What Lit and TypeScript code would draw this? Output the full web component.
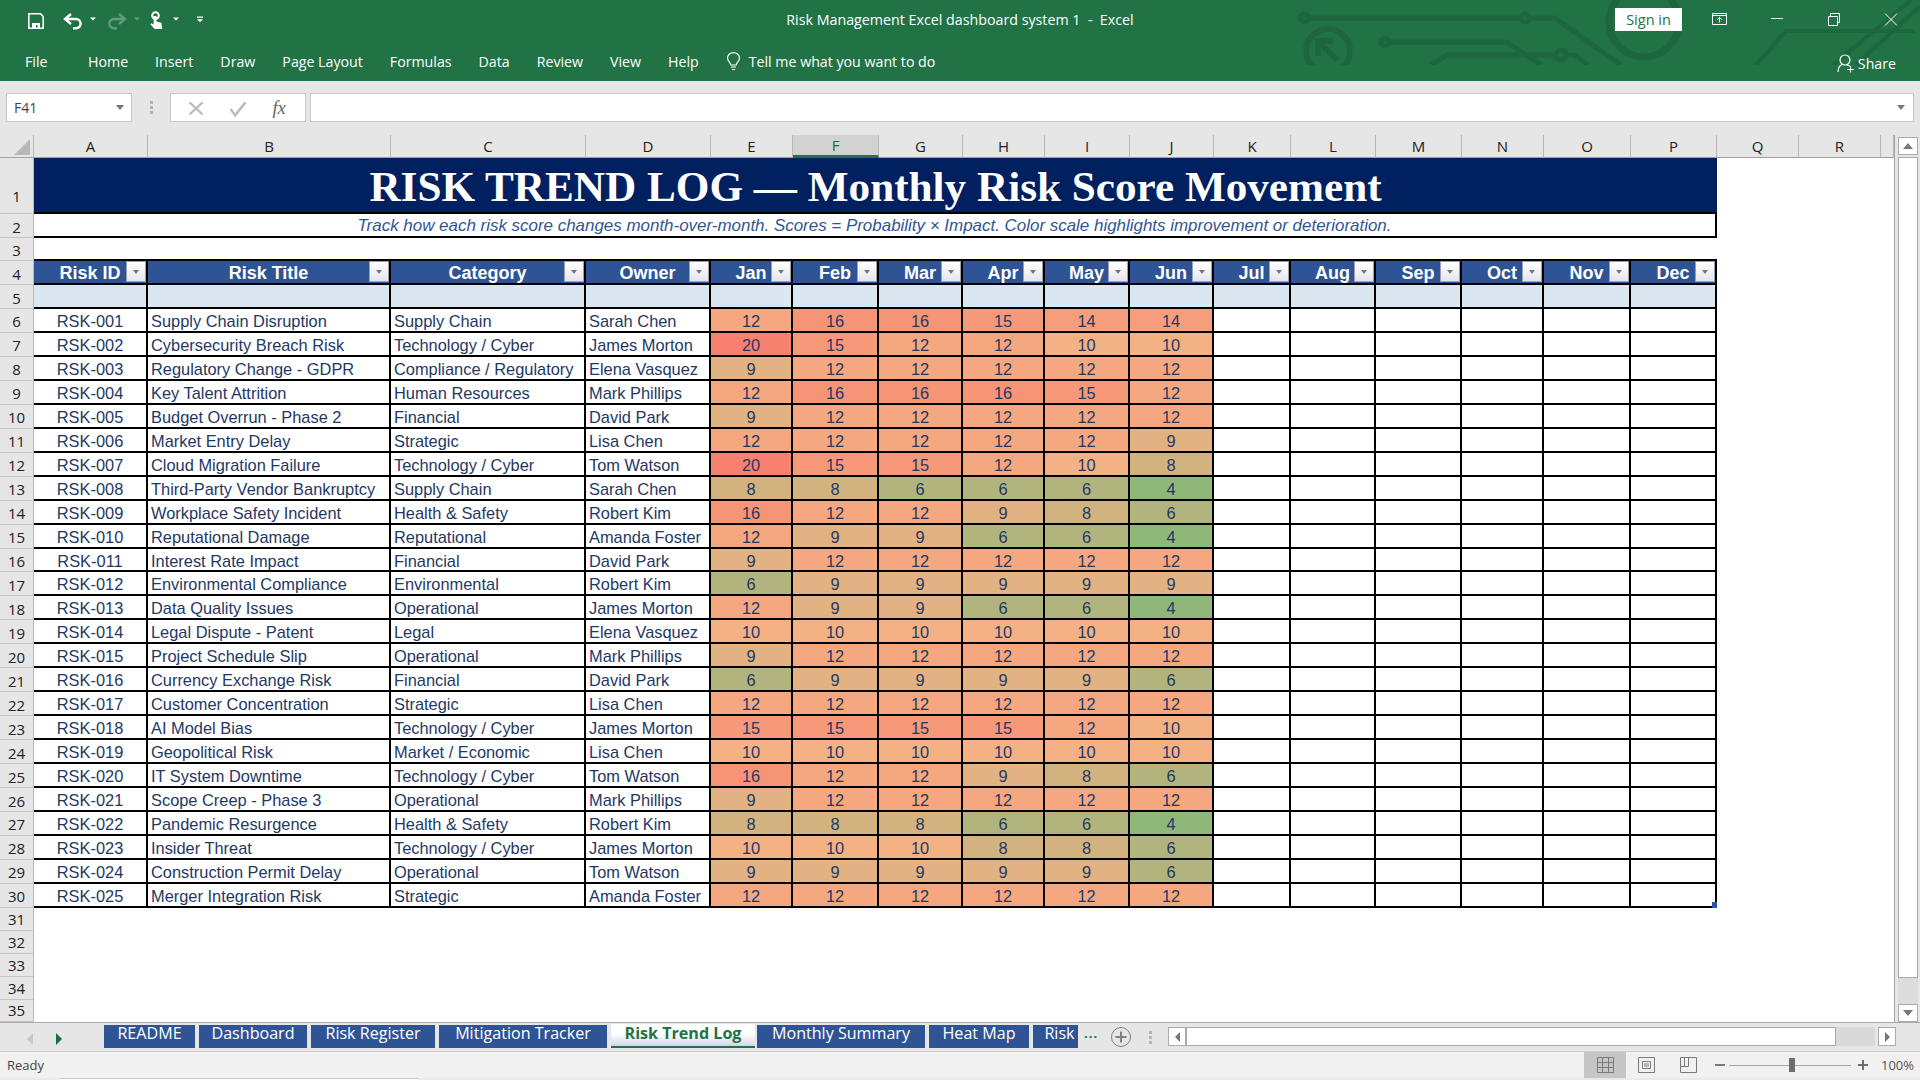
import { LitElement, html, css, svg } from "lit";
import { customElement } from "lit/decorators.js";

type Row = [string, string, string, number[]];
const ROWS: Row[] = [
  ["Supply Chain Disruption", "Supply Chain", "Sarah Chen", [12, 16, 16, 15, 14, 14]],
  ["Cybersecurity Breach Risk", "Technology / Cyber", "James Morton", [20, 15, 12, 12, 10, 10]],
  ["Regulatory Change - GDPR", "Compliance / Regulatory", "Elena Vasquez", [9, 12, 12, 12, 12, 12]],
  ["Key Talent Attrition", "Human Resources", "Mark Phillips", [12, 16, 16, 16, 15, 12]],
  ["Budget Overrun - Phase 2", "Financial", "David Park", [9, 12, 12, 12, 12, 12]],
  ["Market Entry Delay", "Strategic", "Lisa Chen", [12, 12, 12, 12, 12, 9]],
  ["Cloud Migration Failure", "Technology / Cyber", "Tom Watson", [20, 15, 15, 12, 10, 8]],
  ["Third-Party Vendor Bankruptcy", "Supply Chain", "Sarah Chen", [8, 8, 6, 6, 6, 4]],
  ["Workplace Safety Incident", "Health & Safety", "Robert Kim", [16, 12, 12, 9, 8, 6]],
  ["Reputational Damage", "Reputational", "Amanda Foster", [12, 9, 9, 6, 6, 4]],
  ["Interest Rate Impact", "Financial", "David Park", [9, 12, 12, 12, 12, 12]],
  ["Environmental Compliance", "Environmental", "Robert Kim", [6, 9, 9, 9, 9, 9]],
  ["Data Quality Issues", "Operational", "James Morton", [12, 9, 9, 6, 6, 4]],
  ["Legal Dispute - Patent", "Legal", "Elena Vasquez", [10, 10, 10, 10, 10, 10]],
  ["Project Schedule Slip", "Operational", "Mark Phillips", [9, 12, 12, 12, 12, 12]],
  ["Currency Exchange Risk", "Financial", "David Park", [6, 9, 9, 9, 9, 6]],
  ["Customer Concentration", "Strategic", "Lisa Chen", [12, 12, 12, 12, 12, 12]],
  ["AI Model Bias", "Technology / Cyber", "James Morton", [15, 15, 15, 15, 12, 10]],
  ["Geopolitical Risk", "Market / Economic", "Lisa Chen", [10, 10, 10, 10, 10, 10]],
  ["IT System Downtime", "Technology / Cyber", "Tom Watson", [16, 12, 12, 9, 8, 6]],
  ["Scope Creep - Phase 3", "Operational", "Mark Phillips", [9, 12, 12, 12, 12, 12]],
  ["Pandemic Resurgence", "Health & Safety", "Robert Kim", [8, 8, 8, 6, 6, 4]],
  ["Insider Threat", "Technology / Cyber", "James Morton", [10, 10, 10, 8, 8, 6]],
  ["Construction Permit Delay", "Operational", "Tom Watson", [9, 9, 9, 9, 9, 6]],
  ["Merger Integration Risk", "Strategic", "Amanda Foster", [12, 12, 12, 12, 12, 12]],
];

const LETTERS = "ABCDEFGHIJKLMNOPQR".split("");
const HEAD = ["Risk ID", "Risk Title", "Category", "Owner", "Jan", "Feb", "Mar", "Apr", "May", "Jun", "Jul", "Aug", "Sep", "Oct", "Nov", "Dec"];
const MENU = ["Home", "Insert", "Draw", "Page Layout", "Formulas", "Data", "Review", "View", "Help"];
const TABS: [string, number][] = [
  ["README", 91], ["Dashboard", 108], ["Risk Register", 124], ["Mitigation Tracker", 168],
  ["Risk Trend Log", 144], ["Monthly Summary", 168], ["Heat Map", 100], ["Risk", 45],
];

function heat(v: number): string {
  const low = [143, 183, 122], mid = [244, 177, 131], high = [248, 128, 110];
  const a = v <= 10 ? low : mid, b = v <= 10 ? mid : high;
  const t = v <= 10 ? (v - 4) / 6 : (v - 10) / 10;
  const c = a.map((x, i) => Math.round(x + (b[i] - x) * t));
  return `rgb(${c[0]},${c[1]},${c[2]})`;
}

const qat = svg`
  <path d="M.8 2.800h11.700l2.700 2.700v11.700H.8z" fill="none" stroke="#fff" stroke-width="1.600"/>
  <path d="M4 12h8v5.500H9.600v-3.400H8v3.400H4z" fill="#fff"/>
  <path d="M43 3l-6 5 6 5" fill="none" stroke="#fff" stroke-width="2.400"/>
  <path d="M38 8h10a4.600 4.600 0 0 1 0 9.200h-3" fill="none" stroke="#fff" stroke-width="2.400"/>
  <path d="M62 6.500h6l-3 3z" fill="#fff"/>
  <path d="M91 3l6 5-6 5" fill="none" stroke="#5f9d7c" stroke-width="2.400"/>
  <path d="M96 8H86a4.600 4.600 0 0 0 0 9.200h3" fill="none" stroke="#5f9d7c" stroke-width="2.400"/>
  <path d="M106 6.500h6l-3 3z" fill="#5f9d7c"/>
  <circle cx="127.500" cy="4.600" r="3.300" fill="none" stroke="#fff" stroke-width="2"/>
  <path d="M125.700 5h2.800v5.600l4.800 1.200 1 6.200h-7.600l-4.400-4.800 1.100-1 2.300 1.300z" fill="#fff"/>
  <path d="M145 6.500h6l-3 3z" fill="#fff"/>
  <path d="M169 5.500h6v1.200h-6zM169 8.200h6l-3 3z" fill="#fff"/>
`;

const winCtl = svg`
  <path d="M.5 .5h14v11h-14zM.5 2.500h14" fill="none" stroke="#fff"/>
  <path d="M7.500 9.500V4.500M5.200 6.600l2.300-2.200 2.300 2.200" fill="none" stroke="#fff"/>
  <path d="M59 5.500h12" stroke="#fff"/>
  <path d="M116.500 3.500h9v9h-9zM118.500 3.500V.5h9v9h-2" fill="none" stroke="#fff"/>
  <path d="M173 .5l12 12M185 .5l-12 12" stroke="#fff" fill="none"/>
`;

@customElement("app-root")
export class AppRoot extends LitElement {
  static styles = css`
    :host { display: block; width: 1920px; height: 1080px; overflow: hidden; font-family: "Open Sans", "Noto Sans", sans-serif; background: #fff; }
    .app { display: flex; flex-direction: column; height: 1080px; }

    .ribbon { position: relative; height: 81px; background: #217346; color: #fff; flex: none; overflow: hidden; }
    .circuit { position: absolute; left: 0; top: 0; }
    .titlebar { position: relative; height: 41px; display: grid; grid-template-columns: 1fr auto 1fr; align-items: center; }
    .qat { display: block; margin: 0 0 0 28px; }
    .doc { font-size: 14.25px; white-space: pre; color: #fff; margin-top: -2px; }
    .win { display: flex; justify-content: flex-end; align-items: center; padding-right: 22px; }
    .signin { width: 67px; height: 23px; background: #fff; color: #217346; font-size: 14.5px; display: flex; align-items: center; justify-content: center; margin-right: 30px; margin-top: -2px; }
    .winsvg { display: block; margin-top: -2px; }
    .menubar { position: relative; height: 40px; display: flex; align-items: center; padding-left: 25px; font-size: 14.2px; }
    .file { width: 63px; }
    .menu { display: flex; gap: 27px; }
    .bulb { display: block; margin-left: 27px; }
    .tell { margin-left: 8px; }
    .share { margin-left: auto; display: flex; align-items: center; gap: 2px; padding: 4px 24px 0 0; }

    .fbar { flex: none; height: 54px; background: #e6e6e6; display: flex; align-items: flex-start; padding: 12px 6px 0; box-sizing: border-box; }
    .name, .fx, .input { height: 29px; background: #fff; border: 1px solid #c8c8c8; box-sizing: border-box; }
    .name { width: 126px; display: flex; align-items: center; justify-content: space-between; padding: 0 7px; font-size: 14px; color: #444; }
    .tri { width: 0; height: 0; border-left: 4px solid transparent; border-right: 4px solid transparent; border-top: 5px solid #777; }
    .vdots { width: 38px; display: flex; flex-direction: column; align-items: center; justify-content: center; gap: 2px; height: 29px; }
    .vdots i { display: block; width: 3px; height: 3px; background: #b4b4b4; }
    .fx { width: 136px; display: block; }
    .input { flex: 1; margin-left: 4px; display: flex; align-items: center; justify-content: flex-end; padding-right: 8px; }

    .sheet { flex: none; height: 887px; display: flex; background: #e6e6e6; }
    .grid {
      display: grid; width: 1895px; box-sizing: border-box; border-right: 1px solid #a6a6a6; background: #fff;
      grid-template-columns: 34px 114px 243px 195px 125px 82px 86px 84px 82px 85px 84px 77px 85px 86px 82px 87px 86px 82px 82px 13px;
      grid-template-rows: 23px 56px 24px 23px 24px 24px repeat(25, 23.96px) 23px 23px 23px 23px 22px;
    }
    .ch { background: #e6e6e6; border-right: 1px solid #b8b8b8; border-bottom: 1px solid #9f9f9f; box-sizing: border-box; display: flex; align-items: center; justify-content: center; font-size: 15px; color: #222; }
    .ch.sel { background: #d2d2d2; color: #1d6b41; border-bottom: 3px solid #217346; }
    .corner { position: relative; }
    .corner svg { position: absolute; left: 14px; top: 4px; }
    .rh { background: #e6e6e6; border-right: 1px solid #b8b8b8; border-bottom: 1px solid #c4c4c4; box-sizing: border-box; display: flex; align-items: center; justify-content: center; font-size: 15px; color: #222; padding-top: 2px; }
    .rh.r1 { padding-top: 21px; }
    .rh.low { padding-top: 0; }
    .title { grid-column: span 16; background: #002060; color: #fff; border-bottom: 2px solid #000; box-sizing: border-box; display: flex; align-items: center; justify-content: center; font: bold 43.2px "Liberation Serif", serif; padding-top: 3px; }
    .sub { grid-column: span 16; background: #fff; color: #2f5597; border-bottom: 2px solid #000; border-right: 2px solid #000; box-sizing: border-box; display: flex; align-items: center; justify-content: center; font: italic 16.95px "Liberation Sans", sans-serif; padding-top: 2px; }
    .gap { grid-column: span 16; border-bottom: 2px solid #000; box-sizing: border-box; }
    .fill { grid-column: span 3; }
    .blank { grid-column: span 19; }
    .c { border-right: 2px solid #000; border-bottom: 2px solid #000; box-sizing: border-box; display: flex; align-items: center; font: 16.4px "Liberation Sans", sans-serif; color: #1f3864; white-space: nowrap; overflow: hidden; min-width: 0; padding-top: 3px; }
    .l { padding-left: 3px; }
    .m { justify-content: center; }
    .th { position: relative; background: #2f5496; color: #fff; font: bold 18px "Liberation Sans", sans-serif; justify-content: center; padding-top: 2px; }
    .fb { position: absolute; right: 0; top: 0; width: 20px; height: 21px; box-sizing: border-box; background: linear-gradient(#fff, #e4e6ec); border: 1px solid #9aa0ad; display: flex; align-items: center; justify-content: center; }
    .fb .tri { border-left-width: 3.5px; border-right-width: 3.5px; border-top-width: 4px; }
    .b5 { background: #dce6f1; }
    .last { position: relative; overflow: visible; }
    .grip { position: absolute; right: -2px; bottom: -2px; width: 5px; height: 6px; background: #2e51a8; }

    .vscroll { width: 25px; display: flex; flex-direction: column; padding: 2px 2px 0 3px; box-sizing: border-box; }
    .vbtn { height: 18px; background: #fff; border: 1px solid #ababab; box-sizing: border-box; display: flex; align-items: center; justify-content: center; flex: none; }
    .up { width: 0; height: 0; border-left: 5px solid transparent; border-right: 5px solid transparent; border-bottom: 6px solid #777; }
    .dn { width: 0; height: 0; border-left: 5px solid transparent; border-right: 5px solid transparent; border-top: 6px solid #777; }
    .thumb { height: 821px; margin-top: 2px; background: #fff; border: 1px solid #ababab; box-sizing: border-box; flex: none; }
    .vtrack { flex: 1; background: #dcdcdc; }

    .tabbar { flex: none; height: 30px; background: #e6e6e6; border-top: 1px solid #a9a9a9; border-bottom: 1px solid #cfcfcf; box-sizing: border-box; display: flex; align-items: flex-start; position: relative; }
    .nav { width: 104px; flex: none; display: block; }
    .tabs { display: flex; gap: 4px; padding-top: 2px; flex: none; }
    .tab { height: 23px; box-sizing: border-box; background: #2f5496; color: #fff; font-size: 16.1px; line-height: 17px; text-align: center; white-space: nowrap; flex: none; }
    .tab.on { background: linear-gradient(#fff 45%, #cdd6ea); color: #217346; font-weight: 700; border-bottom: 2px solid #217346; margin: -1px -2px 0 0; height: 24px; line-height: 18px; }
    .tab.cut { padding-left: 8px; }
    .more { width: 15px; margin-left: 6px; color: #1c6b3f; font-size: 13px; line-height: 12px; letter-spacing: 1px; flex: none; padding-top: 4px; white-space: nowrap; font-weight: 700; }
    .plus { display: block; margin: 3px 0 0 12px; flex: none; }
    .sep { display: flex; flex-direction: column; gap: 2px; margin: 8px 0 0 18px; flex: none; }
    .sep i { display: block; width: 3px; height: 3px; background: #b4b4b4; }
    .hscroll { display: flex; margin: 4px 0 0 16px; height: 19px; width: 728px; flex: none; }
    .hbtn { width: 18px; height: 19px; background: #fff; border: 1px solid #ababab; box-sizing: border-box; display: flex; align-items: center; justify-content: center; flex: none; }
    .lf { width: 0; height: 0; border-top: 5px solid transparent; border-bottom: 5px solid transparent; border-right: 5px solid #777; }
    .rt { width: 0; height: 0; border-top: 5px solid transparent; border-bottom: 5px solid transparent; border-left: 5px solid #777; }
    .hthumb { width: 650px; background: #fff; border: 1px solid #ababab; box-sizing: border-box; flex: none; }
    .htrack { flex: 1; background: #d9d9d9; margin-right: 3px; }

    .status { flex: none; height: 26px; background: #f1f1f1; display: flex; align-items: center; font-size: 13px; color: #444; padding-left: 7px; }
    .views { margin-left: auto; display: block; flex: none; }
    .pct { width: 39px; font-size: 13px; color: #555; flex: none; }
    .strip { flex: none; height: 2px; background: #e9e9e9; padding-left: 60px; }
    .strip div { width: 358px; height: 2px; background: #fafafa; border-top: 1px solid #cdcdcd; box-sizing: border-box; }
  `;

  private renderGrid() {
    const out: unknown[] = [];
    out.push(html`<div class="ch corner"><svg width="16" height="16"><path d="M16 0v16H0z" fill="#b8b8b8"/></svg></div>`);
    LETTERS.forEach((l) => out.push(html`<div class="ch ${l === "F" ? "sel" : ""}">${l}</div>`));
    out.push(html`<div class="ch"></div>`);
    const rh = (n: number) => html`<div class="rh ${n === 1 ? "r1" : n > 30 ? "low" : ""}">${n}</div>`;

    out.push(rh(1), html`<div class="title">RISK TREND LOG — Monthly Risk Score Movement</div>`, html`<div class="fill"></div>`);
    out.push(rh(2), html`<div class="sub">Track how each risk score changes month-over-month. Scores = Probability × Impact. Color scale highlights improvement or deterioration.</div>`, html`<div class="fill"></div>`);
    out.push(rh(3), html`<div class="gap"></div>`, html`<div class="fill"></div>`);
    out.push(rh(4));
    HEAD.forEach((h) => out.push(html`<div class="c th">${h}<span class="fb"><span class="tri"></span></span></div>`));
    out.push(html`<div class="fill"></div>`, rh(5));
    HEAD.forEach(() => out.push(html`<div class="c b5"></div>`));
    out.push(html`<div class="fill"></div>`);

    ROWS.forEach((r, i) => {
      out.push(rh(i + 6));
      out.push(html`<div class="c m">RSK-${String(i + 1).padStart(3, "0")}</div>`);
      out.push(html`<div class="c l">${r[0]}</div><div class="c l">${r[1]}</div><div class="c l">${r[2]}</div>`);
      r[3].forEach((v) => out.push(html`<div class="c m" style="background:${heat(v)}">${v}</div>`));
      for (let k = 0; k < 6; k++) {
        const last = i === ROWS.length - 1 && k === 5;
        out.push(html`<div class="c ${last ? "last" : ""}">${last ? html`<span class="grip"></span>` : ""}</div>`);
      }
      out.push(html`<div class="fill"></div>`);
    });
    for (let n = 31; n <= 35; n++) out.push(rh(n), html`<div class="blank"></div>`);
    return out;
  }

  render() {
    return html`<div class="app">
      <div class="ribbon">
        <svg class="circuit" width="1920" height="65" fill="none" stroke="#1d6640" stroke-width="5">
          <path d="M1309 18H1521M1529 18H1555L1621 65"/>
          <circle cx="1304.500" cy="18" r="4"/><circle cx="1525" cy="18" r="4"/>
          <path d="M1389 42H1506L1541 65"/><circle cx="1385" cy="42" r="4"/>
          <path d="M1431 65L1447 55H1557M1566 55H1574L1588 65"/><circle cx="1561" cy="55" r="5"/>
          <circle cx="1328" cy="51" r="22" stroke-width="6"/>
          <path d="M1337 60L1320 43M1318 56V41H1333" stroke-width="6"/>
          <circle cx="1644" cy="22" r="35" stroke-width="7"/>
          <path d="M1756 65L1786 31H1915M1833 65L1911 0M1856 65L1920 6" stroke-width="4"/>
        </svg>
        <div class="titlebar">
          <svg class="qat" width="176" height="20" viewBox="0 0 176 20">${qat}</svg>
          <div class="doc">Risk Management Excel dashboard system 1  -  Excel</div>
          <div class="win"><div class="signin">Sign in</div><svg class="winsvg" width="186" height="13" viewBox="0 0 186 13">${winCtl}</svg></div>
        </div>
        <div class="menubar">
          <div class="file">File</div>
          <div class="menu">${MENU.map((m) => html`<span>${m}</span>`)}</div>
          <svg class="bulb" width="15" height="19" viewBox="0 0 15 19" fill="none" stroke="#fff" stroke-width="1.200"><path d="M4.800 13c0-2.500-3.300-3.600-3.300-7a6 5.400 0 0 1 12 0c0 3.400-3.300 4.500-3.300 7zM5 15h5M6 17.500h3"/></svg>
          <span class="tell">Tell me what you want to do</span>
          <div class="share">
            <svg width="19" height="19" viewBox="0 0 19 19" fill="none" stroke="#fff" stroke-width="1.200"><circle cx="8" cy="6" r="5"/><path d="M1 18c0-4 2-6.500 4-7.500M10 11l3 1M13.500 12v6.500M10 15.500h7"/></svg>
            <span>Share</span>
          </div>
        </div>
      </div>

      <div class="fbar">
        <div class="name"><span>F41</span><span class="tri"></span></div>
        <div class="vdots"><i></i><i></i><i></i></div>
        <svg class="fx" width="136" height="29" viewBox="0 0 136 29">
          <path d="M16 9l14 13M30 9L16 22" stroke="#bdbdbd" stroke-width="2.400" fill="none"/>
          <path d="M60 16l5 7 11-14" stroke="#bdbdbd" stroke-width="2.800" fill="none"/>
          <text x="105" y="21" font-family="Liberation Serif, serif" font-style="italic" font-size="20" fill="#666">fx</text>
        </svg>
        <div class="input"><span class="tri"></span></div>
      </div>

      <div class="sheet">
        <div class="grid">${this.renderGrid()}</div>
        <div class="vscroll">
          <div class="vbtn"><span class="up"></span></div>
          <div class="thumb"></div>
          <div class="vtrack"></div>
          <div class="vbtn"><span class="dn"></span></div>
        </div>
      </div>

      <div class="tabbar">
        <svg class="nav" width="104" height="28" viewBox="0 0 104 28">
          <path d="M33 10v12l-6-6z" fill="#c8c8c8"/><path d="M56 10v12l6-6z" fill="#1d6b41"/>
        </svg>
        <div class="tabs">
          ${TABS.map(([t, w]) => html`<div class="tab ${t === "Risk Trend Log" ? "on" : t === "Risk" ? "cut" : ""}" style="width:${w}px">${t}</div>`)}
        </div>
        <div class="more">...</div>
        <svg class="plus" width="20" height="22" viewBox="0 0 20 22" fill="none" stroke="#7f7f7f"><circle cx="10" cy="11" r="9.500"/><path d="M4.500 11h11M10 5.500v11" stroke-width="2"/></svg>
        <div class="sep"><i></i><i></i><i></i></div>
        <div class="hscroll">
          <div class="hbtn"><span class="lf"></span></div>
          <div class="hthumb"></div>
          <div class="htrack"></div>
          <div class="hbtn"><span class="rt"></span></div>
        </div>
      </div>

      <div class="status">
        <span>Ready</span>
        <svg class="views" width="297" height="26" viewBox="0 0 297 26" fill="none" stroke="#7a7a7a">
          <rect x="0" y="0" width="42" height="26" fill="#c6c6c6" stroke="none"/>
          <path d="M13.500 5.500h16v15h-16zM13.500 10.500h16M13.500 15.500h16M18.500 5.500v15M24.500 5.500v15"/>
          <path d="M54.500 5.500h16v15h-16z"/><path d="M58.500 9.500h8v7h-8zM60 12h5M60 14h5"/>
          <path d="M96.500 5.500h16v15h-16zM96.500 14.500h8v-9M100.500 5.500v9"/>
          <path d="M131 13h10" stroke-width="2"/>
          <path d="M145 13.500h122" stroke="#a6a6a6"/>
          <rect x="205" y="6" width="6" height="14" fill="#6e6e6e" stroke="none"/>
          <path d="M274 13h10M279 8v10" stroke-width="2" stroke="#6e6e6e"/>
        </svg>
        <span class="pct">100%</span>
      </div>
      <div class="strip"><div></div></div>
    </div>`;
  }
}
